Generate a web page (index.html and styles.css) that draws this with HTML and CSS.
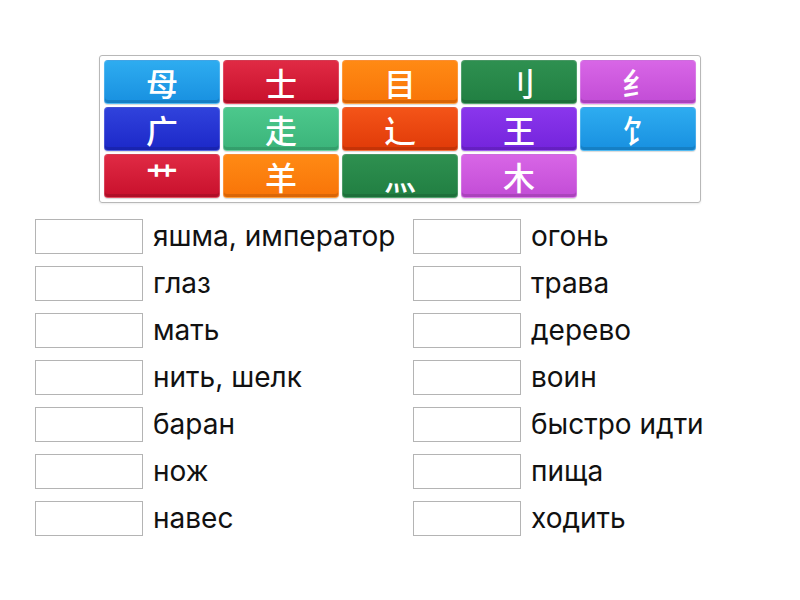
FILE: index.html
```html
<!DOCTYPE html>
<html lang="ru">
<head>
    <meta charset="UTF-8">
    <meta name="viewport" content="width=device-width, initial-scale=1.0">
    <title>Сопоставление</title>
    <link rel="stylesheet" href="styles.css">
</head>
<body>
    <div class="page">
        <div class="bank">
            <div class="tile blue">母</div>
            <div class="tile red">士</div>
            <div class="tile orange">目</div>
            <div class="tile green">刂</div>
            <div class="tile violet">纟</div>
            <div class="tile navy">广</div>
            <div class="tile mint">走</div>
            <div class="tile flame">辶</div>
            <div class="tile purple">王</div>
            <div class="tile blue">饣</div>
            <div class="tile red">艹</div>
            <div class="tile orange">羊</div>
            <div class="tile green">灬</div>
            <div class="tile violet">木</div>
        </div>

        <div class="answers">
            <div class="column">
                <div class="row"><div class="slot"></div><span class="label">яшма, император</span></div>
                <div class="row"><div class="slot"></div><span class="label">глаз</span></div>
                <div class="row"><div class="slot"></div><span class="label">мать</span></div>
                <div class="row"><div class="slot"></div><span class="label">нить, шелк</span></div>
                <div class="row"><div class="slot"></div><span class="label">баран</span></div>
                <div class="row"><div class="slot"></div><span class="label">нож</span></div>
                <div class="row"><div class="slot"></div><span class="label">навес</span></div>
            </div>
            <div class="column">
                <div class="row"><div class="slot"></div><span class="label">огонь</span></div>
                <div class="row"><div class="slot"></div><span class="label">трава</span></div>
                <div class="row"><div class="slot"></div><span class="label">дерево</span></div>
                <div class="row"><div class="slot"></div><span class="label">воин</span></div>
                <div class="row"><div class="slot"></div><span class="label">быстро идти</span></div>
                <div class="row"><div class="slot"></div><span class="label">пища</span></div>
                <div class="row"><div class="slot"></div><span class="label">ходить</span></div>
            </div>
        </div>
    </div>
</body>
</html>
```

FILE: styles.css
```css
body {
    margin: 0;
    background: #fff;
    font-family: Inter, "Noto Sans", "Noto Sans CJK SC", sans-serif;
    color: #111;
}
.page {
    padding: 55px 0 0 35px;
}
.bank {
    display: grid;
    grid-template-columns: repeat(5, 116px);
    grid-auto-rows: 44px;
    gap: 3px;
    width: 592px;
    margin-left: 64px;
    padding: 4px;
    border: 1px solid #b8b8b8;
    border-radius: 3px;
    box-shadow: 0 1px 2px rgba(0, 0, 0, 0.08);
}
.tile {
    display: flex;
    align-items: center;
    justify-content: center;
    border-radius: 4px;
    color: #fff;
    font-family: "Noto Sans CJK SC", sans-serif;
    font-size: 32px;
    font-weight: 500;
    border: 1px solid rgba(255, 255, 255, 0.18);
    box-shadow: inset 0 -3px 0 rgba(0, 0, 0, 0.12), 0 1px 1px rgba(0, 0, 0, 0.15);
    box-sizing: border-box;
}
.blue { background: linear-gradient(#2eacf0, #1890e0); }
.red { background: linear-gradient(#e02a44, #c8102c); }
.orange { background: linear-gradient(#ff8a14, #f87408); }
.green { background: linear-gradient(#2e9050, #217f42); }
.violet { background: linear-gradient(#d866e6, #c24cd6); }
.navy { background: linear-gradient(#3042dc, #1c28c8); }
.mint { background: linear-gradient(#4cc88c, #3bb47a); }
.flame { background: linear-gradient(#f45418, #e03a08); }
.purple { background: linear-gradient(#8a36ec, #7424dc); }

.answers {
    display: grid;
    grid-template-columns: 378px 378px;
    margin-top: 16px;
}
.column {
    display: flex;
    flex-direction: column;
    gap: 12px;
}
.row {
    display: flex;
    align-items: center;
    gap: 10px;
    height: 35px;
}
.slot {
    width: 108px;
    height: 35px;
    box-sizing: border-box;
    border: 1px solid #b4b4b4;
    background: #fff;
}
.label {
    font-size: 28px;
    line-height: 35px;
}
```
